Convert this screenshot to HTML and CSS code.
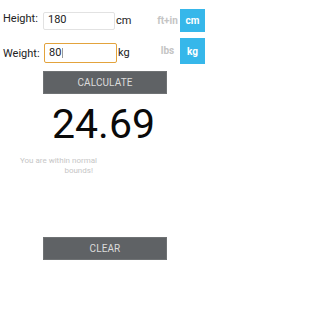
FILE: index.html
```html
<!DOCTYPE html>
<html>
<head>
<meta charset="utf-8">
<link rel="stylesheet" href="styles.css">
</head>
<body>
<div class="app">
  <div class="row row-height">
    <span class="label label-height">Height:</span>
    <div class="field field-height">180</div>
    <span class="unit">cm</span>
    <span class="alt">ft+in</span>
    <span class="toggle toggle-height">cm</span>
  </div>
  <div class="row row-weight">
    <span class="label label-weight">Weight:</span>
    <div class="field field-weight focused">80<span class="caret"></span></div>
    <span class="unit unit-weight">kg</span>
    <span class="alt">lbs</span>
    <span class="toggle toggle-weight">kg</span>
  </div>
  <div class="btn btn-calc">CALCULATE</div>
  <div class="result">24.69</div>
  <p class="msg">You are within normal<br><span class="msg-end">bounds!</span></p>
  <div class="btn btn-clear">CLEAR</div>
</div>
</body>
</html>
```
FILE: styles.css
```css
html, body {
  margin: 0;
  padding: 0;
  background: #ffffff;
}
body {
  font-family: Roboto, "Liberation Sans", sans-serif;
  width: 207px;
  height: 310px;
  overflow: hidden;
}
.app {
  display: flex;
  flex-direction: column;
  padding-top: 9px;
}
.row {
  display: flex;
  align-items: center;
  padding-left: 3px;
  padding-right: 2px;
}
.row-height {
  height: 23px;
}
.row-weight {
  height: 26px;
  margin-top: 6px;
}
.label {
  font-size: 11px;
  line-height: 13px;
  color: #222222;
}
.label-height {
  width: 40px;
  margin-bottom: 4px;
}
.label-weight {
  width: 41px;
  margin-top: 4px;
}
.field {
  box-sizing: border-box;
  border: 1px solid #e2e2e2;
  border-radius: 2px;
  font-size: 11px;
  color: #222222;
  padding-left: 4px;
  display: flex;
  align-items: baseline;
}
.field-height {
  width: 72px;
  height: 18px;
  line-height: 14px;
  padding-bottom: 2px;
}
.field-weight {
  width: 73px;
  height: 20px;
  line-height: 18px;
  margin-top: 4px;
}
.focused {
  border-color: #e3a33c;
}
.caret {
  display: inline-block;
  width: 1px;
  height: 10px;
  margin-left: 1px;
  background: #9a9a9a;
  align-self: center;
}
.unit {
  font-size: 11px;
  line-height: 13px;
  color: #222222;
  margin-left: 1px;
}
.unit-weight {
  margin-top: 2px;
}
.alt {
  margin-left: auto;
  width: 25px;
  text-align: center;
  font-size: 10px;
  font-weight: bold;
  line-height: 12px;
  color: #c4c4c4;
}
.toggle {
  width: 25px;
  background: #36b7ea;
  color: #ffffff;
  font-size: 10px;
  font-weight: bold;
  text-align: center;
}
.toggle-height {
  height: 23px;
  line-height: 24px;
}
.toggle-weight {
  height: 26px;
  line-height: 27px;
}
.btn {
  margin-left: 43px;
  width: 124px;
  height: 23px;
  line-height: 23px;
  background: #5f6265;
  box-shadow: inset 0 0 0 1px rgba(255, 255, 255, 0.1);
  color: #dcdcdc;
  font-size: 10px;
  text-align: center;
  letter-spacing: 0.1px;
}
.btn-calc {
  margin-top: 7px;
}
.result {
  margin-top: 9.5px;
  font-size: 41px;
  line-height: 41px;
  text-align: center;
  color: #0a0a0a;
}
.msg {
  margin: 11.5px 0 0 17px;
  width: 80px;
  font-size: 8px;
  line-height: 10px;
  text-align: right;
  color: #c6c6c6;
}
.msg-end {
  margin-right: 4px;
}
.btn-clear {
  margin-top: 61px;
}
```
